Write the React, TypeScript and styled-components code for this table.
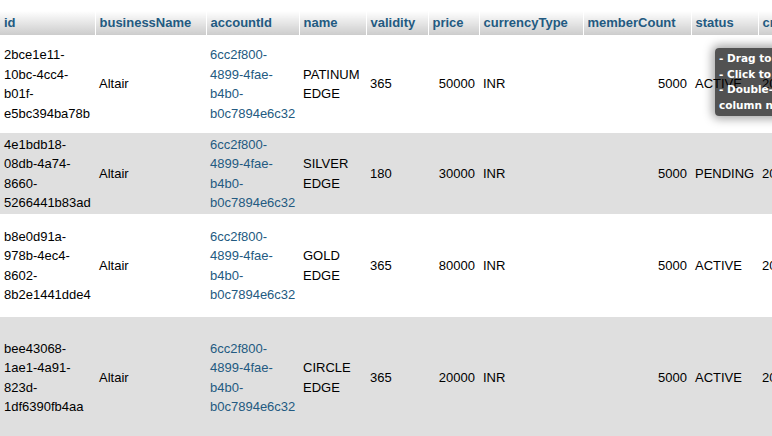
import React from "react";
import styled, { createGlobalStyle } from "styled-components";

const Global = createGlobalStyle`
  html, body { margin: 0; padding: 0; background: #fff; overflow: hidden; }
  body { font-family: "Liberation Sans", Arial, sans-serif; font-size: 13px; color: #000; }
`;

const Page = styled.div`
  position: relative;
  width: 772px;
  height: 436px;
  overflow: hidden;
  padding-top: 11px;
  box-sizing: border-box;
`;

const Table = styled.table`
  border-collapse: collapse;
  table-layout: fixed;
  width: 958px;
`;

const Th = styled.th`
  height: 24px;
  padding: 0 4px 1px 4px;
  text-align: left;
  font-weight: bold;
  font-size: 13px;
  color: #235a81;
  background: linear-gradient(#ffffff, #cccccc);
  border-right: 1px solid #ffffff;
  white-space: nowrap;
  overflow: hidden;
  box-sizing: border-box;
`;

const Tr = styled.tr<{ $alt: boolean; $h: number }>`
  height: ${(p) => p.$h}px;
  background: ${(p) => (p.$alt ? "#dfdfdf" : "#ffffff")};
`;

const Td = styled.td<{ $right?: boolean; $link?: boolean }>`
  padding: 0 4px 0 4px;
  vertical-align: middle;
  line-height: 19.5px;
  text-align: ${(p) => (p.$right ? "right" : "left")};
  color: ${(p) => (p.$link ? "#235a81" : "#000")};
  white-space: ${(p) => (p.$right ? "nowrap" : "normal")};
  overflow-wrap: normal;
`;

const NoWrap = styled(Td)`
  white-space: nowrap;
`;

const Tip = styled.div`
  position: absolute;
  left: 715px;
  top: 48px;
  width: 160px;
  padding: 3px 4px;
  border-radius: 4px;
  background: rgba(0, 0, 0, 0.68);
  box-shadow: 0 0 10px 3px rgba(0, 0, 0, 0.35);
  color: #fff;
  font-family: "DejaVu Sans", Verdana, sans-serif;
  font-weight: bold;
  font-size: 10.5px;
  line-height: 15.5px;
  white-space: nowrap;
`;

type Row = {
  id: string;
  name: string;
  validity: string;
  price: string;
  status: string;
  h: number;
};

const rows: Row[] = [
  { id: "2bce1e11-10bc-4cc4-b01f-e5bc394ba78b", name: "PATINUM EDGE", validity: "365", price: "50000", status: "ACTIVE", h: 98 },
  { id: "4e1bdb18-08db-4a74-8660-5266441b83ad", name: "SILVER EDGE", validity: "180", price: "30000", status: "PENDING", h: 81 },
  { id: "b8e0d91a-978b-4ec4-8602-8b2e1441dde4", name: "GOLD EDGE", validity: "365", price: "80000", status: "ACTIVE", h: 103 },
  { id: "bee43068-1ae1-4a91-823d-1df6390fb4aa", name: "CIRCLE EDGE", validity: "365", price: "20000", status: "ACTIVE", h: 121 },
];

const cols = [
  { label: "id", w: 95 },
  { label: "businessName", w: 111 },
  { label: "accountId", w: 93 },
  { label: "name", w: 67 },
  { label: "validity", w: 62 },
  { label: "price", w: 51 },
  { label: "currencyType", w: 104 },
  { label: "memberCount", w: 108 },
  { label: "status", w: 67 },
  { label: "createdAt", w: 200 },
];

export default function App() {
  return (
    <Page>
      <Global />
      <Table>
        <colgroup>
          {cols.map((c) => (
            <col key={c.label} style={{ width: c.w }} />
          ))}
        </colgroup>
        <thead>
          <tr>
            {cols.map((c) => (
              <Th key={c.label}>{c.label}</Th>
            ))}
          </tr>
        </thead>
        <tbody>
          {rows.map((r, i) => (
            <Tr key={r.id} $alt={i % 2 === 1} $h={r.h}>
              <Td>{r.id}</Td>
              <Td>Altair</Td>
              <Td $link>6cc2f800-4899-4fae-b4b0-b0c7894e6c32</Td>
              <Td>{r.name}</Td>
              <Td>{r.validity}</Td>
              <Td $right>{r.price}</Td>
              <Td>INR</Td>
              <Td $right>5000</Td>
              <NoWrap>{r.status}</NoWrap>
              <NoWrap>2023-05-10 10:24:51</NoWrap>
            </Tr>
          ))}
        </tbody>
      </Table>
      <Tip>
        - Drag to reorder.
        <br />- Click to mark/unmark.
        <br />- Double-click to copy
        <br />column name.
      </Tip>
    </Page>
  );
}
